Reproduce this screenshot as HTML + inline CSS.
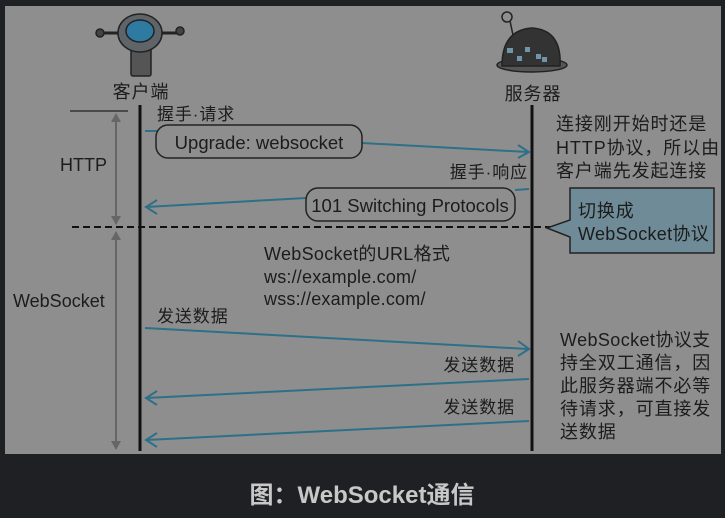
<!DOCTYPE html>
<html><head><meta charset="utf-8"><style>
html,body{margin:0;padding:0;background:#1f2023;width:725px;height:518px;overflow:hidden}
svg{display:block}
text{font-family:"Liberation Sans","Noto Sans CJK SC",sans-serif;fill:#1c1c1c}
.w{letter-spacing:1.8px}
.r{letter-spacing:0.9px}
</style></head><body>
<svg width="725" height="518" viewBox="0 0 725 518" xmlns="http://www.w3.org/2000/svg">
<rect x="0" y="0" width="725" height="518" fill="#1f2023"/>
<rect x="5" y="6" width="716" height="448" fill="#8e8e8e"/>
<!-- client robot -->
<g stroke="#222" stroke-width="1.5">
<line x1="100" y1="33" x2="180" y2="33" stroke-width="3"/>
<circle cx="100" cy="33" r="4" fill="#444"/><circle cx="180" cy="31" r="4" fill="#444"/>
<rect x="131" y="48" width="20" height="28" rx="2" fill="#555"/>
<ellipse cx="140" cy="33" rx="22" ry="19" fill="#5e6468"/>
<ellipse cx="140" cy="31" rx="14" ry="11" fill="#2f7aa0"/>
</g>
<!-- server robot -->
<g stroke="#222" stroke-width="1.5">
<circle cx="507" cy="17" r="5" fill="none"/>
<line x1="510" y1="21" x2="513" y2="35"/>
<ellipse cx="532" cy="65" rx="35" ry="7" fill="#555"/>
<path d="M502 66 Q502 30 532 28 Q562 30 560 66 Z" fill="#333"/>
</g>
<g fill="#6f95a8"><rect x="507" y="48" width="6" height="5"/><rect x="517" y="56" width="5" height="5"/><rect x="536" y="54" width="5" height="5"/><rect x="525" y="47" width="5" height="5"/><rect x="542" y="57" width="5" height="5"/></g>
<text x="141" y="98" font-size="18" text-anchor="middle" class="r">客户端</text>
<text x="533" y="100" font-size="18" text-anchor="middle" class="r">服务器</text>
<!-- lifelines -->
<line x1="140" y1="105" x2="140" y2="451" stroke="#111" stroke-width="3"/>
<line x1="532" y1="105" x2="532" y2="451" stroke="#111" stroke-width="3"/>
<line x1="70" y1="111" x2="128" y2="111" stroke="#333" stroke-width="1.5"/>
<line x1="72" y1="227" x2="555" y2="227" stroke="#111" stroke-width="2" stroke-dasharray="7,4"/>
<!-- left arrows -->
<g stroke="#666" stroke-width="2" fill="#666">
<line x1="116" y1="120" x2="116" y2="218"/>
<path d="M111 122 L116 113 L121 122 Z" stroke="none"/><path d="M111 216 L116 225 L121 216 Z" stroke="none"/>
<line x1="116" y1="238" x2="116" y2="443"/>
<path d="M111 240 L116 231 L121 240 Z" stroke="none"/><path d="M111 441 L116 450 L121 441 Z" stroke="none"/>
</g>
<text x="60" y="171" font-size="18">HTTP</text>
<text x="13" y="307" font-size="18">WebSocket</text>
<!-- handshake -->
<text x="157" y="120" font-size="17" class="r">握手·请求</text>
<g stroke="#2d7088" stroke-width="2" fill="none">
<line x1="145" y1="131" x2="157" y2="131"/>
<line x1="362" y1="143" x2="528" y2="152"/>
<path d="M518 145 L529 152 L518 158"/>
<line x1="515" y1="190" x2="529" y2="189"/>
<line x1="306" y1="198" x2="146" y2="207"/>
<path d="M157 200 L146 207 L157 214"/>
<line x1="145" y1="328" x2="528" y2="349"/>
<path d="M518 341 L529 349 L518 356"/>
<line x1="529" y1="379" x2="146" y2="398"/>
<path d="M157 391 L146 398 L157 405"/>
<line x1="529" y1="421" x2="146" y2="440"/>
<path d="M157 433 L146 440 L157 447"/>
</g>
<rect x="156" y="125" width="206" height="33" rx="12" fill="none" stroke="#222" stroke-width="1.5"/>
<text x="259" y="149" font-size="18.5" text-anchor="middle">Upgrade: websocket</text>
<text x="528" y="178" font-size="17" text-anchor="end" class="r">握手·响应</text>
<rect x="306" y="188" width="209" height="33" rx="12" fill="none" stroke="#222" stroke-width="1.5"/>
<text x="410" y="212" font-size="18.5" text-anchor="middle">101 Switching Protocols</text>
<!-- right notes -->
<text x="556" y="130" font-size="18" class="r">连接刚开始时还是</text>
<text x="556" y="154" font-size="18" class="r">HTTP协议，所以由</text>
<text x="556" y="177" font-size="18" class="r">客户端先发起连接</text>
<path d="M570 188 L714 188 L714 253 L570 253 L570 237 L547 228 L570 220 Z" fill="#6e8b97" stroke="#222" stroke-width="1.5"/>
<text x="578" y="217" font-size="18" class="r">切换成</text>
<text x="578" y="240" font-size="18" letter-spacing="0.3">WebSocket协议</text>
<text x="264" y="260" font-size="18" letter-spacing="0.3">WebSocket的URL格式</text>
<text x="264" y="283" font-size="18" letter-spacing="0.2">ws://example.com/</text>
<text x="264" y="305" font-size="18" letter-spacing="0.2">wss://example.com/</text>
<text x="157" y="322" font-size="17" class="r">发送数据</text>
<text x="515" y="371" font-size="17" text-anchor="end" class="r">发送数据</text>
<text x="515" y="413" font-size="17" text-anchor="end" class="r">发送数据</text>
<text x="560" y="346" font-size="18" letter-spacing="0.4">WebSocket协议支</text>
<text x="560" y="369" font-size="18" class="r">持全双工通信，因</text>
<text x="560" y="392" font-size="18" class="r">此服务器端不必等</text>
<text x="560" y="415" font-size="18" class="r">待请求，可直接发</text>
<text x="560" y="438" font-size="18" class="r">送数据</text>
<text x="362" y="503" font-size="24" font-weight="bold" text-anchor="middle" style="fill:#c8c8c8">图：WebSocket通信</text>
</svg>
</body></html>
